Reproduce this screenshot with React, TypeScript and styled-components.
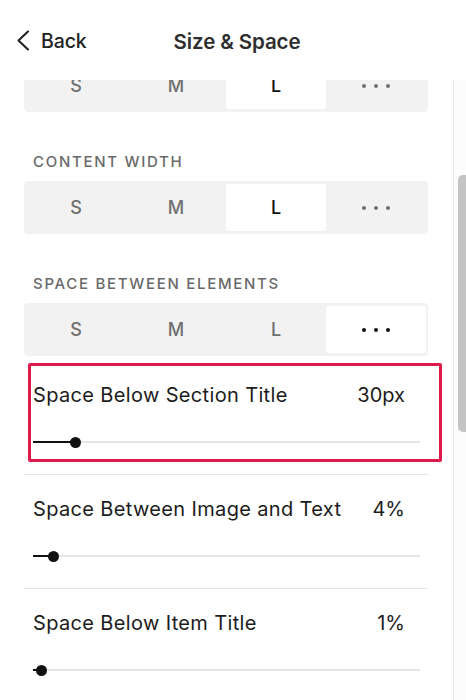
import React from 'react'
import styled, { createGlobalStyle } from 'styled-components'

const GlobalStyle = createGlobalStyle`
  html, body {
    margin: 0;
    padding: 0;
    background: #ffffff;
  }
  body {
    font-family: Inter, "Liberation Sans", sans-serif;
    color: #1c1c1c;
    -webkit-font-smoothing: antialiased;
  }
`

type SizeOption = 'S' | 'M' | 'L' | 'more'

const OPTIONS: SizeOption[] = ['S', 'M', 'L', 'more']

const SECTIONS = [
    { label: '', active: 'L' as SizeOption },
    { label: 'Content Width', active: 'L' as SizeOption },
    { label: 'Space Between Elements', active: 'more' as SizeOption },
]

const SLIDERS = [
    { name: 'Space Below Section Title', value: '30px', pos: 0.111, highlight: true },
    { name: 'Space Between Image and Text', value: '4%', pos: 0.052, highlight: false },
    { name: 'Space Below Item Title', value: '1%', pos: 0.021, highlight: false },
]

const BackIcon = () => (
    <svg width="14" height="21" viewBox="0 0 14 21" fill="none">
        <polyline points="12,1.5 2.5,10.5 12,19.5" stroke="#222" strokeWidth="2.1" strokeLinecap="round" strokeLinejoin="round" />
    </svg>
)

const App = () => {
    return (
        <Panel>
            <GlobalStyle />
            <Header>
                <BackButton>
                    <BackIcon />
                    <span>Back</span>
                </BackButton>
                <Title>Size &amp; Space</Title>
                <span />
            </Header>

            <Body>
                <ScrollArea>
                    <Content>
                        {SECTIONS.map((section, i) => (
                            <Group key={i} first={i === 0}>
                                {section.label && <GroupLabel>{section.label}</GroupLabel>}
                                <Segmented>
                                    {OPTIONS.map((opt) => (
                                        <Segment key={opt} active={section.active === opt}>
                                            {opt === 'more' ? (
                                                <Dots>
                                                    <Dot active={section.active === opt} />
                                                    <Dot active={section.active === opt} />
                                                    <Dot active={section.active === opt} />
                                                </Dots>
                                            ) : opt}
                                        </Segment>
                                    ))}
                                </Segmented>
                            </Group>
                        ))}

                        <SliderList>
                            {SLIDERS.map((s) => (
                                <SliderItem key={s.name}>
                                    {s.highlight && <Highlight />}
                                    <SliderHead>
                                        <SliderName>{s.name}</SliderName>
                                        <SliderValue>{s.value}</SliderValue>
                                    </SliderHead>
                                    <Track>
                                        <Fill style={{ width: `${s.pos * 100}%` }} />
                                        <Thumb style={{ left: `${s.pos * 100}%` }} />
                                    </Track>
                                </SliderItem>
                            ))}
                        </SliderList>
                    </Content>
                </ScrollArea>
                <ScrollTrack>
                    <ScrollThumb />
                </ScrollTrack>
            </Body>
        </Panel>
    )
}

// CSS styles
const Panel = styled.div`
    width: 466px;
    height: 700px;
    display: flex;
    flex-direction: column;
    background: #fff;
    overflow: hidden;
`

const Header = styled.div`
    height: 80px;
    flex: none;
    display: grid;
    grid-template-columns: 1fr auto 1fr;
    align-items: center;
    padding: 0 16px;
    box-sizing: border-box;
`

const BackButton = styled.div`
    display: flex;
    align-items: center;
    gap: 11px;
    font-size: 19.5px;
    font-weight: 500;
    color: #222;
    letter-spacing: -0.1px;
    padding-top: 1px;
`

const Title = styled.div`
    font-size: 20.5px;
    font-weight: 600;
    color: #2e2e2e;
    letter-spacing: -0.1px;
    padding-left: 8px;
    padding-top: 2px;
`

const Body = styled.div`
    flex: 1;
    display: flex;
    min-height: 0;
`

const ScrollArea = styled.div`
    flex: 1;
    overflow: hidden;
`

const Content = styled.div`
    margin-top: -21px;
    padding: 0 25px 0 24px;
`

const Group = styled.div<{ first: boolean }>`
    display: flex;
    flex-direction: column;
    gap: 11px;
    margin-top: ${(p) => (p.first ? '0' : '42px')};
`

const GroupLabel = styled.div`
    font-size: 15px;
    line-height: 16px;
    font-weight: 500;
    letter-spacing: 1.7px;
    text-transform: uppercase;
    color: #6a6a6a;
    padding-left: 9px;
`

const Segmented = styled.div`
    display: grid;
    grid-template-columns: repeat(4, 1fr);
    height: 53px;
    padding: 3px 2px;
    box-sizing: border-box;
    background: #f2f2f2;
    border-radius: 4px;
`

const Segment = styled.div<{ active: boolean }>`
    display: flex;
    align-items: center;
    justify-content: center;
    font-size: 18px;
    font-weight: 500;
    color: ${(p) => (p.active ? '#111' : '#707070')};
    background: ${(p) => (p.active ? '#fff' : 'transparent')};
    border-radius: 3px;
`

const Dots = styled.div`
    display: flex;
    gap: 8px;
`

const Dot = styled.span<{ active: boolean }>`
    width: 4px;
    height: 4px;
    border-radius: 50%;
    background: ${(p) => (p.active ? '#111' : '#707070')};
`

const SliderList = styled.div`
    margin-top: 5px;
`

const SliderItem = styled.div`
    position: relative;
    padding: 23px 8px 26px 9px;
    border-bottom: 1px solid #e6e6e6;
`

const Highlight = styled.div`
    position: absolute;
    left: 4px;
    right: -14px;
    top: 2px;
    height: 99px;
    border: 3px solid #e0194b;
    box-sizing: border-box;
    border-radius: 2px;
    pointer-events: none;
`

const SliderHead = styled.div`
    display: flex;
    justify-content: space-between;
    align-items: center;
    height: 22px;
    margin-bottom: 30px;
`

const SliderName = styled.div`
    font-size: 20px;
    font-weight: 400;
    color: #1c1c1c;
    letter-spacing: 0.35px;
`

const SliderValue = styled.div`
    font-size: 20px;
    color: #1c1c1c;
    margin-right: 15px;
`

const Track = styled.div`
    position: relative;
    height: 12px;
    &::before {
        content: '';
        position: absolute;
        left: 0;
        right: 0;
        top: 5px;
        height: 2px;
        background: #e6e6e6;
    }
`

const Fill = styled.div`
    position: absolute;
    left: 0;
    top: 5px;
    height: 2px;
    background: #111;
`

const Thumb = styled.div`
    position: absolute;
    top: 0.5px;
    width: 11px;
    height: 11px;
    margin-left: -5.5px;
    border-radius: 50%;
    background: #111;
`

const ScrollTrack = styled.div`
    width: 13px;
    flex: none;
    border-left: 1px solid #e8e8e8;
    background: #fcfcfc;
    box-sizing: border-box;
    padding-top: 95px;
    padding-left: 4px;
`

const ScrollThumb = styled.div`
    height: 257px;
    background: #c4c4c4;
    border-radius: 5px 0 0 5px;
`

export default App
